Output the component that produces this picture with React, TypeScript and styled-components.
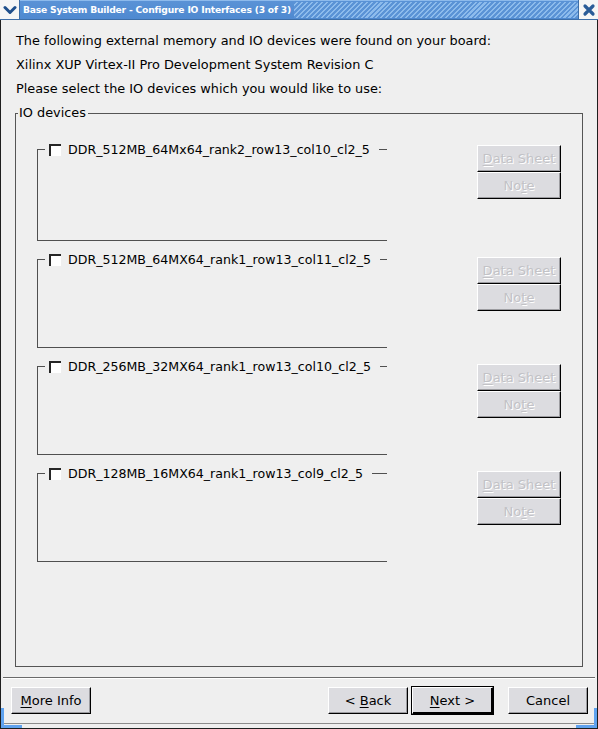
import React from "react";
import styled, { createGlobalStyle } from "styled-components";

const Global = createGlobalStyle`
  html, body { margin: 0; padding: 0; background: #efefef; }
  body { font-family: "DejaVu Sans", "Liberation Sans", sans-serif; font-size: 12.87px; color: #000; }
  * { box-sizing: border-box; }
`;

const Window = styled.div`
  position: relative;
  width: 598px;
  height: 729px;
  display: flex;
  flex-direction: column;
  background: #efefef;
  overflow: hidden;
`;

const TitleBar = styled.div`
  height: 20px;
  display: flex;
  align-items: stretch;
  background: linear-gradient(#8dbaec 0, #8dbaec 1px, #5a92d6 1px, #4f89d0 100%);
  border-bottom: 1px solid #3d6ea8;
`;

const TitleIcon = styled.div`
  width: 20px;
  flex-shrink: 0;
  background: #f6f6f6;
  border-right: 1px solid #3d6ea8;
  display: flex;
  align-items: center;
  justify-content: center;
`;

const TitleText = styled.div`
  padding-left: 3px;
  padding-right: 3px;
  font-family: "DejaVu Sans", sans-serif;
  font-weight: bold;
  font-size: 9.2px;
  letter-spacing: -0.2px;
  line-height: 19px;
  color: #fff;
  white-space: nowrap;
`;

const Stripes = styled.div`
  flex: 1;
  margin: 2px 0 1px;
  background: repeating-linear-gradient(
    135deg,
    #5b93d6 0px,
    #5b93d6 2px,
    #8dbbec 2px,
    #8dbbec 3.5px
  );
`;

const CloseBox = styled.div`
  width: 20px;
  flex-shrink: 0;
  background: #f6f6f6;
  border-left: 1px solid #3d6ea8;
  display: flex;
  align-items: center;
  justify-content: center;
`;

const Frame = styled.div`
  flex: 1;
  display: flex;
  flex-direction: column;
  border-left: 1px solid #1e1e1e;
  border-right: 1px solid #1e1e1e;
  border-bottom: 1px solid #1e1e1e;
`;

const Inner = styled.div`
  flex: 1;
  display: flex;
  flex-direction: column;
  margin: 0 2px 4px;
  padding: 9px 11px 9px 13px;
  border-bottom: 1px solid #8c8c8c;
`;

const IntroLine = styled.div`
  line-height: 24px;
  white-space: nowrap;
`;

const Group = styled.div`
  flex: 1;
  display: flex;
  flex-direction: column;
  width: 568px;
  margin: 5px 0 0 -1px;
`;

const GroupHeader = styled.div`
  height: 14px;
  display: flex;
  align-items: center;
`;

const GroupCorner = styled.div`
  align-self: flex-end;
  flex-shrink: 0;
  width: 3px;
  height: 7px;
  border-left: 1px solid #555;
  border-top: 1px solid #555;
`;

const GroupLabel = styled.span`
  padding: 0 2px 0 1px;
  line-height: 14px;
  white-space: nowrap;
`;

const GroupLine = styled.div`
  align-self: flex-end;
  flex: 1;
  height: 7px;
  border-top: 1px solid #555;
  border-right: 1px solid #555;
`;

const GroupBody = styled.div`
  flex: 1;
  display: flex;
  flex-direction: column;
  gap: 12px;
  padding: 23px 0 0 21px;
  border-left: 1px solid #555;
  border-right: 1px solid #555;
  border-bottom: 1px solid #555;
`;

const DeviceRow = styled.div`
  display: flex;
  align-items: flex-start;
`;

const DeviceBox = styled.div<{ $h: number }>`
  width: 350px;
  flex-shrink: 0;
  height: ${(p) => p.$h}px;
  display: flex;
  flex-direction: column;
`;

const DeviceTitle = styled.div`
  height: 13px;
  display: flex;
  align-items: center;
`;

const DeviceCorner = styled.div`
  align-self: flex-end;
  flex-shrink: 0;
  width: 8px;
  height: 7px;
  border-left: 1px solid #505050;
  border-top: 1px solid #505050;
`;

const Check = styled.span`
  width: 12px;
  height: 12px;
  margin-left: 4px;
  background: #fff;
  border-top: 2px solid #262626;
  border-left: 2px solid #262626;
  flex-shrink: 0;
`;

const DeviceLabel = styled.span`
  margin-left: 7px;
  flex-shrink: 0;
  font-size: 12.6px;
  line-height: 13px;
  white-space: nowrap;
`;

const DeviceLine = styled.div`
  align-self: flex-end;
  flex: 1;
  margin-left: 9px;
  height: 7px;
  border-top: 1px solid #505050;
`;

const DeviceBody = styled.div`
  flex: 1;
  border-left: 1px solid #505050;
  border-bottom: 1px solid #505050;
`;

const ButtonCol = styled.div<{ $top: number }>`
  display: flex;
  flex-direction: column;
  margin-left: 90px;
  margin-top: ${(p) => p.$top}px;
`;

const Button = styled.div<{ $w?: number; $disabled?: boolean; $focus?: boolean }>`
  width: ${(p) => p.$w ?? 84}px;
  height: 27px;
  flex-shrink: 0;
  display: flex;
  align-items: center;
  justify-content: center;
  background: #dcdce0;
  border-top: 1px solid #ffffff;
  border-left: 1px solid #ffffff;
  border-right: 1px solid #000;
  border-bottom: 1px solid #000;
  box-shadow: inset -1px -1px 0 #9c9ca0;
  font-size: 13px;
  white-space: nowrap;
  color: ${(p) => (p.$disabled ? "#c2c2c6" : "#000")};
  text-shadow: ${(p) => (p.$disabled ? "1px 1px 0 #ffffff" : "none")};
  ${(p) =>
    p.$focus
      ? `box-shadow: inset -1px -1px 0 #000, 0 0 0 1px #000;`
      : ""}
`;

const U = styled.span`
  text-decoration: underline;
  text-underline-offset: 2px;
`;

const Separator = styled.div`
  height: 2px;
  margin: 10px -11px 0 -13px;
  border-top: 1px solid #6a6a6a;
  border-bottom: 1px solid #ffffff;
`;

const ButtonBar = styled.div`
  display: flex;
  align-items: center;
  margin: 8px -4px 0 -5px;
`;

const Spacer = styled.div`
  flex: 1;
`;

const Corner = styled.div<{ $side: "left" | "right" }>`
  position: absolute;
  bottom: 1px;
  ${(p) => (p.$side === "left" ? "left: 1px;" : "right: 1px;")}
  width: 21px;
  height: 20px;
  border-bottom: 3px solid #5fa2ef;
  ${(p) =>
    p.$side === "left"
      ? "border-left: 3px solid #5fa2ef;"
      : "border-right: 3px solid #5fa2ef;"}
`;

const BtnGap = styled.div<{ $w: number }>`
  width: ${(p) => p.$w}px;
`;

type Dev = { name: string; h: number; top: number };

const devices: Dev[] = [
  { name: "DDR_512MB_64Mx64_rank2_row13_col10_cl2_5", h: 98, top: 2 },
  { name: "DDR_512MB_64MX64_rank1_row13_col11_cl2_5", h: 95, top: 4 },
  { name: "DDR_256MB_32MX64_rank1_row13_col10_cl2_5", h: 95, top: 4 },
  { name: "DDR_128MB_16MX64_rank1_row13_col9_cl2_5", h: 95, top: 4 },
];

export default function App() {
  return (
    <>
      <Global />
      <Window>
        <TitleBar>
          <TitleIcon>
            <svg width="14" height="10" viewBox="0 0 14 10">
              <polyline
                points="2,2.5 7,7.5 12,2.5"
                fill="none"
                stroke="#1f4f8c"
                strokeWidth="3"
                strokeLinecap="round"
                strokeLinejoin="round"
              />
            </svg>
          </TitleIcon>
          <TitleText>Base System Builder - Configure IO Interfaces (3 of 3)</TitleText>
          <Stripes />
          <CloseBox>
            <svg width="14" height="14" viewBox="0 0 14 14">
              <path
                d="M3 3 L11 11 M11 3 L3 11"
                stroke="#2a5c98"
                strokeWidth="3.2"
                strokeLinecap="round"
              />
            </svg>
          </CloseBox>
        </TitleBar>
        <Frame>
          <Inner>
            <IntroLine>The following external memory and IO devices were found on your board:</IntroLine>
            <IntroLine>Xilinx XUP Virtex-II Pro Development System Revision C</IntroLine>
            <IntroLine>Please select the IO devices which you would like to use:</IntroLine>
            <Group>
              <GroupHeader>
                <GroupCorner />
                <GroupLabel>IO devices</GroupLabel>
                <GroupLine />
              </GroupHeader>
              <GroupBody>
                {devices.map((d) => (
                  <DeviceRow key={d.name}>
                    <DeviceBox $h={d.h}>
                      <DeviceTitle>
                        <DeviceCorner />
                        <Check />
                        <DeviceLabel>{d.name}</DeviceLabel>
                        <DeviceLine />
                      </DeviceTitle>
                      <DeviceBody />
                    </DeviceBox>
                    <ButtonCol $top={d.top}>
                      <Button $disabled>
                        <U>D</U>ata Sheet
                      </Button>
                      <Button $disabled>
                        No<U>t</U>e
                      </Button>
                    </ButtonCol>
                  </DeviceRow>
                ))}
              </GroupBody>
            </Group>
            <Separator />
            <ButtonBar>
              <Button $w={80}>
                <U>M</U>ore Info
              </Button>
              <Spacer />
              <Button $w={80}>
                &lt;&nbsp;<U>B</U>ack
              </Button>
              <BtnGap $w={4} />
              <Button $w={81} $focus>
                <U>N</U>ext &gt;
              </Button>
              <BtnGap $w={15} />
              <Button $w={80}>Cancel</Button>
            </ButtonBar>
          </Inner>
        </Frame>
        <Corner $side="left" />
        <Corner $side="right" />
      </Window>
    </>
  );
}
